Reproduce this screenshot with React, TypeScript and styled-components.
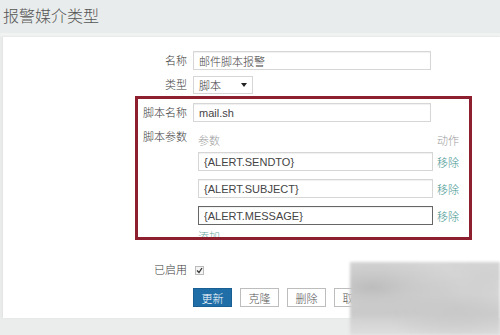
import styled, { createGlobalStyle } from 'styled-components';

const GlobalStyle = createGlobalStyle`
  html, body {
    margin: 0;
    padding: 0;
    background: #eaeded;
  }
  body {
    font-family: "Liberation Sans", "Noto Sans CJK SC", sans-serif;
  }
`;

const StyledPage = styled.div`
  position: relative;
  width: 500px;
  height: 335px;
  overflow: hidden;
  background: #ebecec;
`;

const StyledHeader = styled.div`
  height: 33px;
  padding-left: 3px;
  background: #e9ecec;
  border-bottom: 3px solid #f1f2f2;
`;

const StyledTitle = styled.h1`
  margin: 0;
  font-size: 16px;
  line-height: 31px;
  font-weight: 300;
  color: #555;
  font-family: "Noto Sans CJK SC", sans-serif;
`;

const StyledPanel = styled.div`
  margin: 1px 0 0 3px;
  height: 281px;
  background: #fff;
  box-shadow: -1px 0 2px #e2e2e2;
  padding-top: 14px;
  box-sizing: border-box;
`;

const StyledRow = styled.div<{ $mt?: number }>`
  display: flex;
  align-items: center;
  gap: 3px;
  margin-top: ${(p) => p.$mt ?? 0}px;
`;

const StyledTopRow = styled(StyledRow)`
  align-items: flex-start;
`;

const StyledLabel = styled.label<{ $w: number }>`
  flex: 0 0 ${(p) => p.$w}px;
  box-sizing: border-box;
  padding-right: 3px;
  text-align: right;
  font-size: 11px;
  line-height: 14px;
  font-weight: 300;
  color: #3a3a3a;
`;

const StyledInput = styled.input<{ $w: number; $focus?: boolean }>`
  width: ${(p) => p.$w}px;
  height: 19px;
  box-sizing: border-box;
  padding: 0 5px;
  border: 1px solid ${(p) => (p.$focus ? '#666' : '#d6d6d6')};
  box-shadow: inset 0 1px 1px #f0f0f0;
  font-family: "Liberation Sans", "Noto Sans CJK SC", sans-serif;
  font-size: 11px;
  font-weight: 300;
  color: #444;
  outline: none;
  background: #fff;
`;

const StyledSelect = styled.div`
  width: 60px;
  height: 18px;
  box-sizing: border-box;
  border: 1px solid #d6d6d6;
  display: flex;
  align-items: center;
  justify-content: space-between;
  padding: 0 5px;
  font-size: 11px;
  font-weight: 300;
  color: #333;
`;

const StyledArrow = styled.span`
  width: 0;
  height: 0;
  border-left: 3px solid transparent;
  border-right: 3px solid transparent;
  border-top: 4px solid #222;
`;

const StyledHighlight = styled.div`
  margin: 2px 0 0 132px;
  width: 337px;
  height: 144px;
  box-sizing: border-box;
  border: 3px solid #8d1f2f;
  padding-top: 4px;
  overflow: hidden;
`;

const StyledParams = styled.div`
  display: grid;
  grid-template-columns: 235px auto;
  column-gap: 4px;
  row-gap: 8px;
  padding: 4px 0 0 5px;
  align-items: center;
`;

const StyledHead = styled.span`
  font-size: 11px;
  line-height: 14px;
  font-weight: 300;
  color: #9a9a9a;
  margin-bottom: -4px;
`;

const StyledLink = styled.a`
  font-size: 11px;
  font-weight: 300;
  color: #3f9690;
  text-decoration: none;
`;

const StyledAdd = styled(StyledLink)`
  grid-column: 1 / 3;
  margin-top: -3px;
  line-height: 14px;
  color: #6aa6a0;
`;

const StyledCheck = styled.span`
  margin-left: 2px;
  width: 9px;
  height: 9px;
  box-sizing: border-box;
  border: 1px solid #bbb;
  background: #f4f4f4;
  display: flex;
  align-items: center;
  justify-content: center;
`;

const StyledButtons = styled.div`
  display: flex;
  gap: 8px;
  margin: 11px 0 0 190px;
`;

const StyledButton = styled.button<{ $primary?: boolean }>`
  width: 39px;
  height: 19px;
  padding: 0;
  font-family: "Liberation Sans", "Noto Sans CJK SC", sans-serif;
  font-size: 11px;
  font-weight: 300;
  border: 1px solid ${(p) => (p.$primary ? '#1a5f94' : '#bdbdbd')};
  background: ${(p) => (p.$primary ? '#1f6ea8' : '#fff')};
  color: ${(p) => (p.$primary ? '#fff' : '#555')};
`;

const StyledWatermark = styled.div`
  position: absolute;
  left: 350px;
  top: 262px;
  width: 150px;
  height: 73px;
  background:
    radial-gradient(ellipse at 15% 35%, #bcbcbc 0%, transparent 50%),
    radial-gradient(ellipse at 70% 65%, #c8c8c8 0%, transparent 50%),
    radial-gradient(ellipse at 90% 20%, #d0d0d0 0%, transparent 45%),
    linear-gradient(180deg, #d8d8d8 0%, #e2e2e2 45%, #cdcdcd 70%, #dedede 100%);
  filter: blur(1.5px);
`;

const params = ['{ALERT.SENDTO}', '{ALERT.SUBJECT}', '{ALERT.MESSAGE}'];

export default function App() {
    return (
        <StyledPage>
            <GlobalStyle />
            <StyledHeader>
                <StyledTitle>报警媒介类型</StyledTitle>
            </StyledHeader>
            <StyledPanel>
                <StyledRow>
                    <StyledLabel $w={187}>名称</StyledLabel>
                    <StyledInput $w={238} defaultValue="邮件脚本报警" />
                </StyledRow>
                <StyledRow $mt={6}>
                    <StyledLabel $w={187}>类型</StyledLabel>
                    <StyledSelect>
                        脚本
                        <StyledArrow />
                    </StyledSelect>
                </StyledRow>
                <StyledHighlight>
                    <StyledRow>
                        <StyledLabel $w={52}>脚本名称</StyledLabel>
                        <StyledInput $w={238} defaultValue="mail.sh" />
                    </StyledRow>
                    <StyledTopRow $mt={8}>
                        <StyledLabel $w={52}>脚本参数</StyledLabel>
                        <StyledParams>
                            <StyledHead>参数</StyledHead>
                            <StyledHead>动作</StyledHead>
                            {params.map((p, i) => [
                                <StyledInput key={p} $w={235} $focus={i === 2} defaultValue={p} />,
                                <StyledLink key={p + 'x'}>移除</StyledLink>,
                            ])}
                            <StyledAdd>添加</StyledAdd>
                        </StyledParams>
                    </StyledTopRow>
                </StyledHighlight>
                <StyledRow $mt={23}>
                    <StyledLabel $w={187}>已启用</StyledLabel>
                    <StyledCheck>
                        <svg width="7" height="7" viewBox="0 0 7 7">
                            <path d="M1 3.5 L3 5.5 L6 1" stroke="#333" strokeWidth="1.3" fill="none" />
                        </svg>
                    </StyledCheck>
                </StyledRow>
                <StyledButtons>
                    <StyledButton $primary>更新</StyledButton>
                    <StyledButton>克隆</StyledButton>
                    <StyledButton>删除</StyledButton>
                    <StyledButton>取消</StyledButton>
                </StyledButtons>
            </StyledPanel>
            <StyledWatermark />
        </StyledPage>
    );
}
